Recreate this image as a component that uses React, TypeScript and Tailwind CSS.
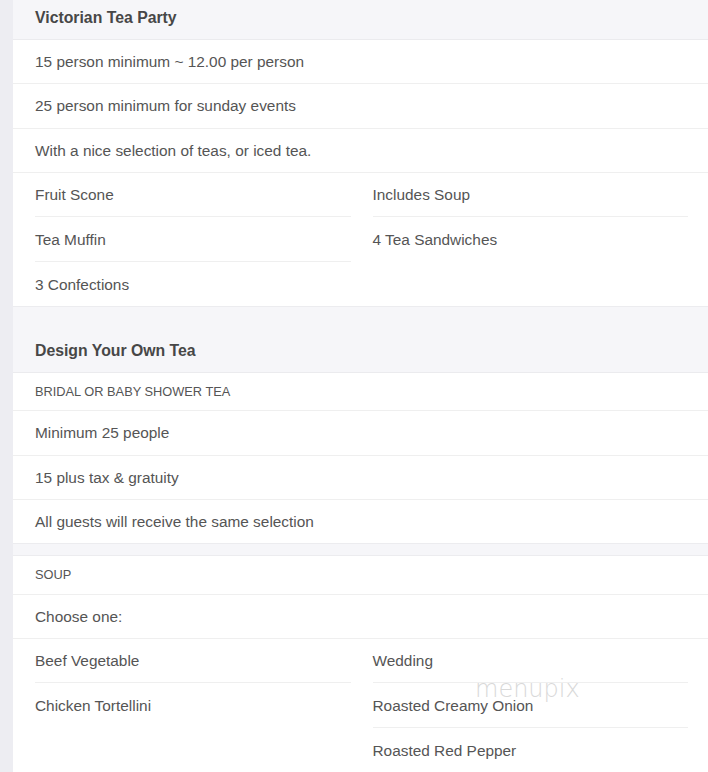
import React from "react";

const font = { fontFamily: '"Liberation Sans", Arial, sans-serif' };

function Header({ children }: { children: React.ReactNode }) {
  return (
    <div className="h-[44px] flex items-center px-[22px] border-b border-[#ebebee] bg-[#f6f6f9] text-[15.8px] font-bold text-[#474747]">
      {children}
    </div>
  );
}

function Row({ children, small = false, h = "h-[44.3px]" }: { children: React.ReactNode; small?: boolean; h?: string }) {
  return (
    <div className={`${h} flex items-center px-[22px] border-b border-[#efefef] ${small ? "text-[12.8px] text-[#555]" : "text-[15.4px] text-[#555]"}`}>
      {children}
    </div>
  );
}

function Col({ items }: { items: string[] }) {
  return (
    <div className="flex flex-col">
      {items.map((it, i) => (
        <div
          key={i}
          className={`h-[44.5px] flex items-center text-[15.4px] text-[#555] ${i < items.length - 1 ? "border-b border-[#efefef]" : ""}`}
        >
          {it}
        </div>
      ))}
    </div>
  );
}

function Cols({ left, right }: { left: string[]; right: string[] }) {
  return (
    <div className="grid grid-cols-2 gap-x-[22px] pl-[22px] pr-[20px]">
      <Col items={left} />
      <Col items={right} />
    </div>
  );
}

export default function App() {
  return (
    <div className="w-[708px] h-[772px] overflow-hidden bg-[#ededf2] flex" style={font}>
      <div className="w-[13px] shrink-0" />
      <div className="flex-1 bg-[#f6f6f9] relative">
        <div className="-mt-[4px]">
          <Header>Victorian Tea Party</Header>
          <div className="bg-white border-b border-[#ececef]">
            <Row>15 person minimum ~ 12.00 per person</Row>
            <Row>25 person minimum for sunday events</Row>
            <Row>With a nice selection of teas, or iced tea.</Row>
            <Cols left={["Fruit Scone", "Tea Muffin", "3 Confections"]} right={["Includes Soup", "4 Tea Sandwiches"]} />
          </div>
        </div>

        <div className="mt-[22px]">
          <Header>Design Your Own Tea</Header>
          <div className="bg-white border-b border-[#ececef]">
            <Row small h="h-[38px]">BRIDAL OR BABY SHOWER TEA</Row>
            <Row>Minimum 25 people</Row>
            <Row>15 plus tax &amp; gratuity</Row>
            <div className="h-[43px] flex items-center px-[22px] text-[15.4px] text-[#555]">All guests will receive the same selection</div>
          </div>
          <div className="h-[11px]" />
          <div className="bg-white border-t border-[#ececef]">
            <Row small h="h-[39px]">SOUP</Row>
            <Row h="h-[44px]">Choose one:</Row>
            <Cols
              left={["Beef Vegetable", "Chicken Tortellini"]}
              right={["Wedding", "Roasted Creamy Onion", "Roasted Red Pepper"]}
            />
          </div>
        </div>

        <div
          className="absolute left-[462px] top-[677px] text-[24px] leading-none text-[#d9d9d9] pointer-events-none"
          style={{ fontFamily: '"DejaVu Sans", sans-serif', fontWeight: 200 }}
        >
          menupix
        </div>
      </div>
    </div>
  );
}
